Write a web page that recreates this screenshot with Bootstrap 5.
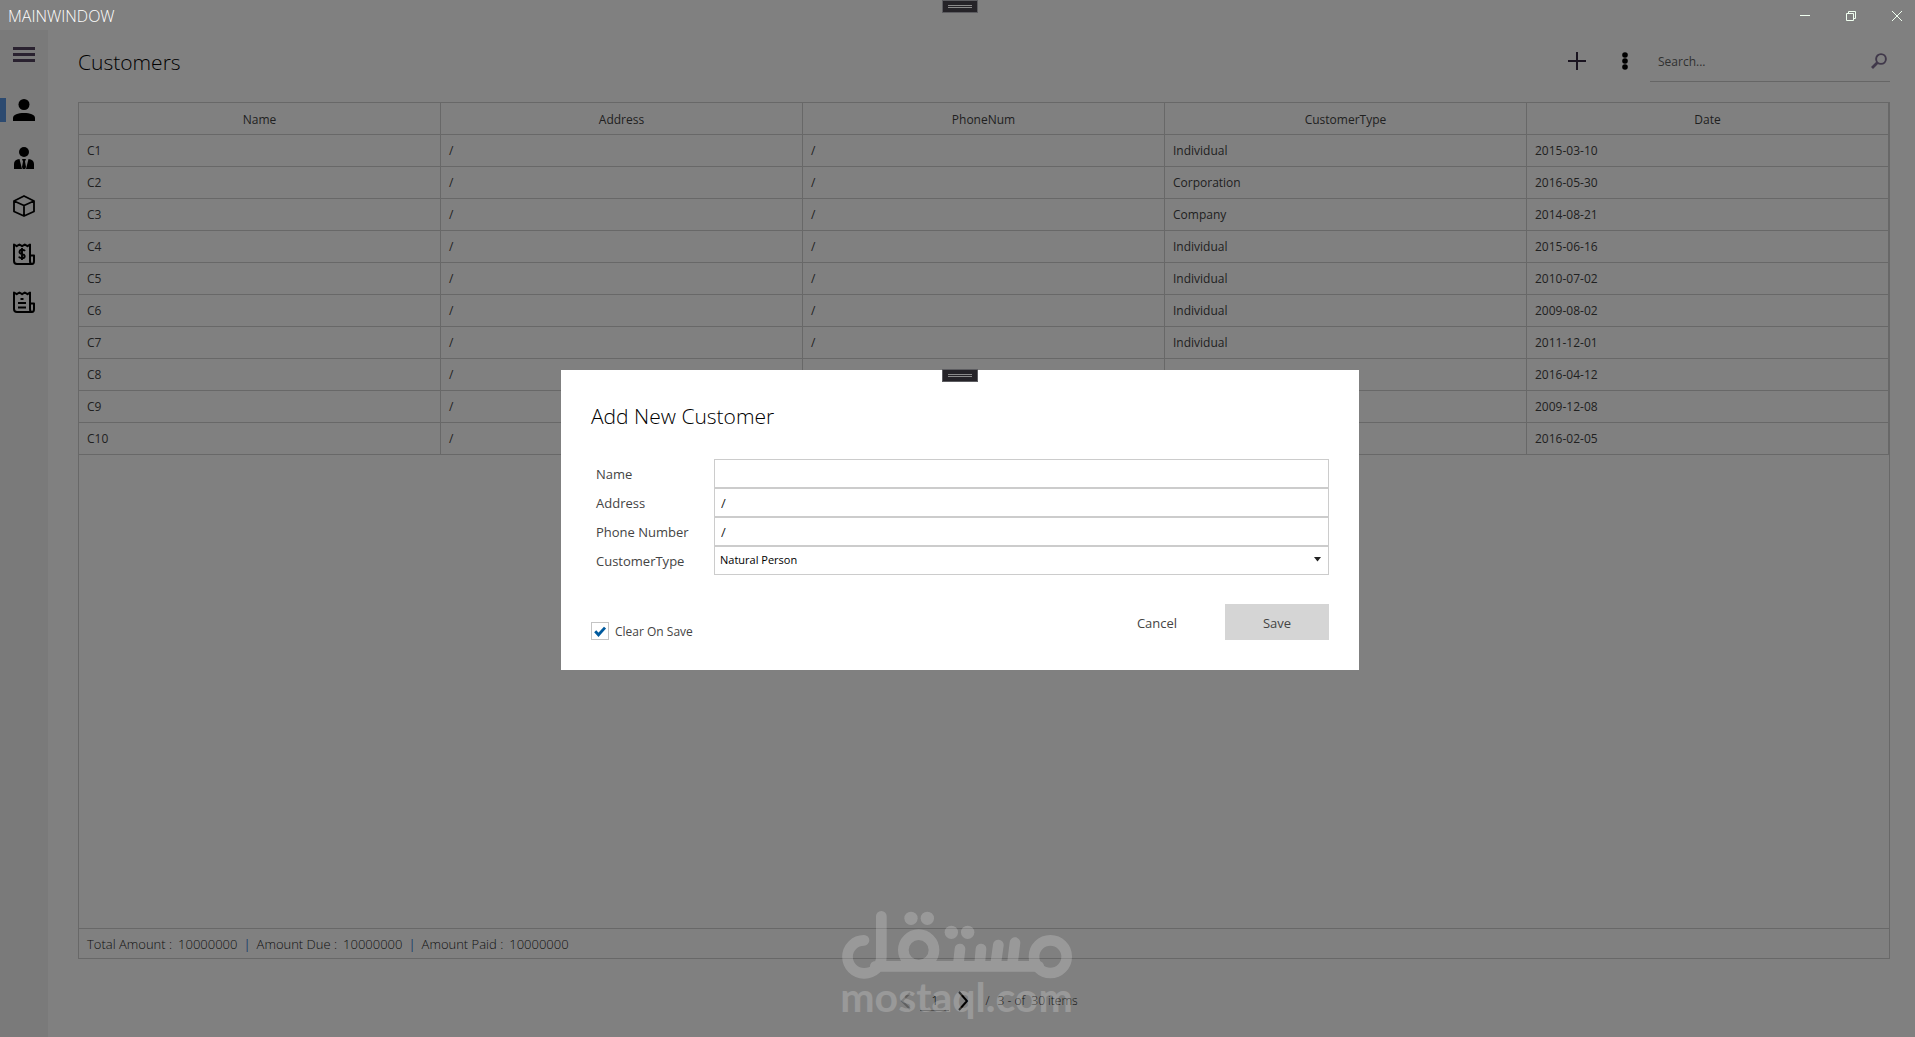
<!DOCTYPE html>
<html lang="en">
<head>
<meta charset="utf-8">
<meta name="viewport" content="width=device-width, initial-scale=1">
<title>MainWindow</title>
<link href="https://cdn.jsdelivr.net/npm/bootstrap@5.3.0/dist/css/bootstrap.min.css" rel="stylesheet">
<style>
  body { font-family: "Open Sans", "Noto Sans", sans-serif; font-size: 12px; line-height: 16px; background: #808080; color: #1f1f1f; }
  button, input, select { font-family: inherit; }
  .plain-btn { background: none; border: 0; padding: 0; color: #000; display: flex; align-items: center; justify-content: center; }
  .title-bar { height: 30px; padding: 1px 0 0 8px; color: #fff; font-size: 16px; font-weight: 300; }
  .title-bar .plain-btn { width: 36px; height: 30px; color: #f0fff0; }
  .title-tools { gap: 10px; }
  .drag-tab { position: absolute; left: 50%; top: 0; width: 36px; height: 13px; margin-left: -16px; background: #252328; border: 1px solid #5c5c60; display: flex; flex-direction: column; align-items: center; justify-content: center; gap: 1px; }
  .modal-content .drag-tab { margin-left: -18px; top: -1px; }
  .drag-tab i { width: 24px; height: 1px; background: #8a8a8a; }
  .side-rail { width: 48px; background: #7a7a7a; padding-top: 1px; }
  .side-rail .plain-btn { margin-bottom: 7px; }
  .side-rail .plain-btn, .side-rail a { width: 48px; height: 48px; color: #000; display: flex; align-items: center; justify-content: center; position: relative; }
  .side-rail a.current::before { content: ""; position: absolute; left: 0; top: 12px; width: 6px; height: 24px; background: #2c4a70; }
  .content-area { padding: 10px 25px 0 30px; }
  .page-head { height: 42px; margin-bottom: 20px; }
  .page-head h1 { font-size: 21px; line-height: 30px; font-weight: 300; color: #000; margin: 0; padding-top: 2px; }
  .page-head .plain-btn { width: 48px; height: 42px; }
  .search-box { width: 240px; height: 42px; border-bottom: 1px solid #666; margin-left: 1px; }
  .search-box input { flex: 1; min-width: 0; background: none; border: 0; outline: 0; padding: 2px 8px 0; font-size: 12px; color: #1f1f1f; }
  .search-box input::placeholder { color: #303030; opacity: 1; }
  .search-box .plain-btn { width: 22px; color: #40384a; }
  .grid-panel { border: 1px solid #686868; }
  .grid-table { width: 100%; table-layout: fixed; border-collapse: separate; border-spacing: 0; font-size: 12px; color: #202020; }
  .grid-table th, .grid-table td { height: 32px; padding: 0 8px; border: 0 solid #686868; border-width: 0 1px 1px 0; }
  .grid-table th { font-weight: 400; text-align: center; padding-top: 2px; }
  .status-row { height: 30px; padding: 1px 8px 0; gap: 6px; border-top: 1px solid #686868; font-size: 13px; font-weight: 300; color: #101010; }
  .status-row .bar { color: #203f6c; font-weight: 400; }
  .pager { height: 78px; padding: 5px 0 0 10px; color: #101010; font-weight: 300; }
  .pager input { width: 29px; height: 20px; background: none; border: 0; border-bottom: 1px solid #505050; text-align: center; padding: 0; font-size: 12px; font-weight: 300; }
  .pager .plain-btn:disabled { opacity: .25; }
  .watermark { position: absolute; left: 50%; bottom: 24px; width: 232px; margin-left: -117px; opacity: .2; color: #fff; pointer-events: none; }
  .watermark span { font-family: Lato, sans-serif; font-size: 41px; line-height: 32px; font-weight: 700; }
  .dialog-wrap { padding: 3px 0 0 5px; pointer-events: none; }
  .dialog-wrap .modal-dialog { max-width: 798px; }
  .dialog-wrap .modal-content { border: 0; border-radius: 0; padding: 30px; color: #444; }
  .dialog-wrap h2 { font-size: 21px; line-height: 32px; font-weight: 300; color: #000; margin: 0 0 27px; }
  .field-row { height: 29px; }
  .field-row label { width: 123px; padding-left: 5px; font-size: 13px; }
  .field-row input, .field-row select { flex: 1; height: 29px; border: 1px solid #ccc; border-radius: 0; background: #fff; color: #222; padding: 0 6px; font-size: 13px; outline: 0; }
  .field-row select { appearance: none; color: #000; font-size: 11px; padding: 0 5px 2px; }
  .select-holder { flex: 1; position: relative; display: flex; }
  .select-holder svg { position: absolute; right: 8px; top: 11px; pointer-events: none; }
  .dialog-foot { margin-top: 29px; }
  .dialog-foot .btn { width: 104px; height: 36px; border: 0; border-radius: 0; font-size: 13px; padding: 3px 0 0; color: #444; }
  .dialog-foot .btn-save { background: #d5d5d5; }
  .tick-line { gap: 6px; }
  .tick-line label { padding-top: 1px; }
  .tick { appearance: none; width: 18px; height: 18px; margin: 0; border: 1px solid #c4c4c4; background: #fff; }
  .tick:checked { background: #fff url("data:image/svg+xml,%3Csvg xmlns='http://www.w3.org/2000/svg' viewBox='0 0 16 16'%3E%3Cpath d='M3.2 8.2l3.3 3.6L13 4.6' fill='none' stroke='%23005a9e' stroke-width='2.8'/%3E%3C/svg%3E") center/16px no-repeat; }
</style>
</head>
<body class="vh-100 d-flex flex-column overflow-hidden position-relative">
<header class="title-bar d-flex align-items-center justify-content-between">
  <span>MAINWINDOW</span>
  <div class="title-tools d-flex">
    <button class="plain-btn" aria-label="Minimize"><svg width="10" height="10"><path d="M0 4.500h10" stroke="currentColor"/></svg></button>
    <button class="plain-btn" aria-label="Restore"><svg width="10" height="10" fill="none" stroke="currentColor"><path d="M.5 2.500h7v7h-7zM2.500 2.500v-2h7v7h-2"/></svg></button>
    <button class="plain-btn" aria-label="Close"><svg width="10" height="10"><path d="M0 0l10 10M10 0L0 10" stroke="currentColor"/></svg></button>
  </div>
</header>
<div class="drag-tab"><i></i><i></i></div>

<div class="d-flex flex-grow-1">
  <nav class="side-rail flex-shrink-0">
    <button class="plain-btn" aria-label="Menu"><svg width="22" height="16"><path d="M0 1.500h22M0 7.500h22M0 13.500h22" stroke="#2a2230" stroke-width="3"/></svg></button>
    <a href="#" class="current" aria-label="Customers"><svg width="22" height="22" fill="currentColor"><circle cx="11" cy="5.500" r="5.500"/><path d="M0 22v-3c0-3.500 5-5 11-5s11 1.500 11 5v3z"/></svg></a>
    <a href="#" aria-label="Employees"><svg width="22" height="22" fill="currentColor"><circle cx="11" cy="5" r="5"/><path d="M6.500 12L9 22H1v-5c0-3 2-4.600 5.500-5zM15.500 12L13 22h8v-5c0-3-2-4.600-5.500-5zM9 12h4l-1 2.500 1 5.500-.8 2H9.800L9 20l1-5.500z"/></svg></a>
    <a href="#" aria-label="Products"><svg width="22" height="22" fill="none" stroke="currentColor" stroke-width="1.800" stroke-linejoin="round"><path d="M11 1l10 5v10.500l-10 4.500-10-4.500V6zM1 6l10 4.500L21 6M11 10.500V21"/></svg></a>
    <a href="#" aria-label="Sales"><svg width="22" height="22" fill="none" stroke="currentColor" stroke-width="2" stroke-linejoin="round"><path d="M19 21H4q-3 0-3-3V1.500l2.700 1.700L6.400 1.500l2.700 1.700 2.700-1.700 2.700 1.700L17 1.500V18q0 3 2 3t2-3v-5.500h-4"/><path d="M12 8q-.8-1.300-3-1.300T6.500 9q0 1.500 2.500 2t2.700 2.200q0 2-2.700 2-2.300 0-3.200-1.600M9 5v12" stroke-width="1.900"/></svg></a>
    <a href="#" aria-label="Invoices"><svg width="22" height="22" fill="none" stroke="currentColor" stroke-width="2" stroke-linejoin="round"><path d="M19 21H4q-3 0-3-3V1.500l2.700 1.700L6.400 1.500l2.700 1.700 2.700-1.700 2.700 1.700L17 1.500V18q0 3 2 3t2-3v-5.500h-4M7.500 8h3M5 12h8M5 16.500h8"/></svg></a>
  </nav>

  <main class="content-area flex-grow-1 d-flex flex-column">
    <div class="page-head d-flex align-items-center">
      <h1 class="me-auto">Customers</h1>
      <button class="plain-btn" aria-label="Add"><svg width="18" height="18"><path d="M9 0v18M0 9h18" stroke="#1a1420" stroke-width="2"/></svg></button>
      <button class="plain-btn" aria-label="More"><svg width="6" height="18"><circle cx="3" cy="3" r="2.800"/><circle cx="3" cy="9" r="2.800"/><circle cx="3" cy="15" r="2.800"/></svg></button>
      <div class="search-box d-flex align-items-center">
        <input type="text" placeholder="Search..." aria-label="Search">
        <button class="plain-btn" aria-label="Find"><svg width="16" height="16" fill="none" stroke="currentColor"><circle cx="10" cy="6" r="4.900" stroke-width="1.900"/><path d="M6.500 9.500L1 15" stroke-width="2.800"/></svg></button>
      </div>
    </div>

    <section class="grid-panel flex-grow-1 d-flex flex-column">
      <table class="grid-table">
        <thead><tr><th>Name</th><th>Address</th><th>PhoneNum</th><th>CustomerType</th><th>Date</th></tr></thead>
        <tbody>
          <tr><td>C1</td><td>/</td><td>/</td><td>Individual</td><td>2015-03-10</td></tr>
          <tr><td>C2</td><td>/</td><td>/</td><td>Corporation</td><td>2016-05-30</td></tr>
          <tr><td>C3</td><td>/</td><td>/</td><td>Company</td><td>2014-08-21</td></tr>
          <tr><td>C4</td><td>/</td><td>/</td><td>Individual</td><td>2015-06-16</td></tr>
          <tr><td>C5</td><td>/</td><td>/</td><td>Individual</td><td>2010-07-02</td></tr>
          <tr><td>C6</td><td>/</td><td>/</td><td>Individual</td><td>2009-08-02</td></tr>
          <tr><td>C7</td><td>/</td><td>/</td><td>Individual</td><td>2011-12-01</td></tr>
          <tr><td>C8</td><td>/</td><td></td><td></td><td>2016-04-12</td></tr>
          <tr><td>C9</td><td>/</td><td></td><td></td><td>2009-12-08</td></tr>
          <tr><td>C10</td><td>/</td><td></td><td></td><td>2016-02-05</td></tr>
        </tbody>
      </table>
      <div class="status-row mt-auto d-flex align-items-center">
        <span>Total Amount :</span><span>10000000</span><span class="bar">|</span>
        <span>Amount Due :</span><span>10000000</span><span class="bar">|</span>
        <span>Amount Paid :</span><span>10000000</span>
      </div>
    </section>

    <div class="pager d-flex align-items-center justify-content-center">
      <button class="plain-btn me-2" aria-label="Previous page" disabled><svg width="12" height="20" fill="none" stroke="currentColor" stroke-width="2"><path d="M10 2L2 10l8 8"/></svg></button>
      <input type="text" value="1" aria-label="Page">
      <button class="plain-btn ms-2 me-3" aria-label="Next page"><svg width="12" height="20" fill="none" stroke="currentColor" stroke-width="2"><path d="M2 1l8 9-8 9"/></svg></button>
      <span class="me-2">/</span><span>3 - of&nbsp; 30 items</span>
    </div>
  </main>
</div>

<div class="modal dialog-wrap d-block" role="dialog" aria-labelledby="dlgTitle">
  <div class="modal-dialog modal-dialog-centered">
    <form class="modal-content">
      <div class="drag-tab"><i></i><i></i></div>
      <h2 id="dlgTitle">Add New Customer</h2>
      <div class="field-row d-flex align-items-center"><label for="fName">Name</label><input id="fName" type="text"></div>
      <div class="field-row d-flex align-items-center"><label for="fAddress">Address</label><input id="fAddress" type="text" value="/"></div>
      <div class="field-row d-flex align-items-center"><label for="fPhone">Phone Number</label><input id="fPhone" type="text" value="/"></div>
      <div class="field-row d-flex align-items-center"><label for="fType">CustomerType</label>
        <div class="select-holder"><select id="fType"><option>Natural Person</option></select><svg width="7" height="5"><path d="M0 0h7L3.500 4.500z" fill="#222"/></svg></div></div>
      <div class="dialog-foot d-flex align-items-end">
        <div class="tick-line d-flex align-items-center me-auto"><input class="tick" type="checkbox" id="fClear" checked><label for="fClear">Clear On Save</label></div>
        <button type="button" class="btn me-3">Cancel</button>
        <button type="button" class="btn btn-save">Save</button>
      </div>
    </form>
  </div>
</div>

<div class="watermark d-flex flex-column align-items-center">
  <svg width="232" height="72" viewBox="62 54 696 216" fill="none" stroke="#fff" stroke-width="32" stroke-linecap="round">
    <path d="M183 76V198A51 49 0 0 1 131 247 49 49 0 0 1 131 148M165 226H655M419 174L414 220M482 174L478 220M534 162L526 220M584 155L576 220"/>
    <circle cx="690" cy="197" r="49"/><circle cx="295" cy="177" r="46"/>
    <g fill="#fff" stroke="none"><circle cx="272" cy="82" r="20"/><circle cx="321" cy="82" r="20"/><circle cx="393" cy="124" r="20"/><circle cx="442" cy="124" r="20"/></g>
  </svg>
  <span>mostaql.com</span>
</div>
<script src="https://cdn.jsdelivr.net/npm/bootstrap@5.3.0/dist/js/bootstrap.bundle.min.js"></script>
</body>
</html>
